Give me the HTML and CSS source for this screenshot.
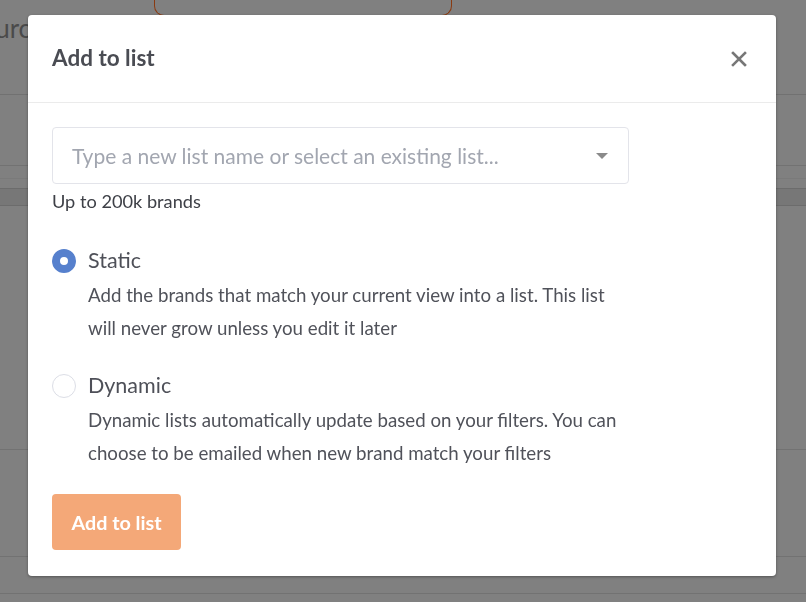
FILE: index.html
```html
<!DOCTYPE html>
<html lang="en">
<head>
    <meta charset="UTF-8">
    <meta name="viewport" content="width=device-width, initial-scale=1.0">
    <title>Add to list</title>
    <link rel="stylesheet" href="styles.css">
</head>
<body>
    <div class="page">
        <div class="page-top">
            <span class="page-title">Resources</span>
            <div class="page-tab"></div>
        </div>
        <div class="page-row row-a"></div>
        <div class="page-row row-b"></div>
        <div class="page-row row-c"></div>
        <div class="page-row row-d"></div>
        <div class="page-row row-e"></div>
        <div class="page-row row-f"></div>
        <div class="page-row row-g"></div>
    </div>

    <div class="overlay">
        <div class="modal">
            <div class="modal-header">
                <h2 class="modal-title">Add to list</h2>
                <button class="close" aria-label="Close">
                    <svg width="16" height="16" viewBox="0 0 16 16">
                        <path d="M2 2 L14 14 M14 2 L2 14" stroke="#777" stroke-width="2.6" stroke-linecap="square"/>
                    </svg>
                </button>
            </div>
            <div class="modal-body">
                <div class="select">
                    <input class="select-input" type="text" placeholder="Type a new list name or select an existing list...">
                    <span class="caret"></span>
                </div>
                <div class="hint">Up to 200k brands</div>

                <label class="option">
                    <span class="radio checked"></span>
                    <span class="option-text">
                        <span class="option-label">Static</span>
                        <span class="option-desc">Add the brands that match your current view into a list. This list will never grow unless you edit it later</span>
                    </span>
                </label>

                <label class="option">
                    <span class="radio"></span>
                    <span class="option-text">
                        <span class="option-label">Dynamic</span>
                        <span class="option-desc">Dynamic lists automatically update based on your filters. You can choose to be emailed when new brand match your filters</span>
                    </span>
                </label>

                <button class="submit">Add to list</button>
            </div>
        </div>
    </div>
</body>
</html>
```

FILE: styles.css
```css
* {
    box-sizing: border-box;
    margin: 0;
    padding: 0;
    font-family: Lato, "Liberation Sans", sans-serif;
}

body {
    background-color: #808080;
    height: 100vh;
    overflow: hidden;
}

/* page behind the dimmed overlay */
.page {
    height: 100%;
}

.page-top {
    display: flex;
    height: 95px;
    border-bottom: 1px solid #717171;
}

.page-title {
    margin-left: -60px;
    margin-top: 12px;
    font-size: 26px;
    color: #4a4a4a;
}

.page-tab {
    margin-left: 98px;
    width: 298px;
    height: 16px;
    border: 1px solid #8a3a10;
    border-top: none;
    border-radius: 0 0 10px 10px;
}

.page-row {
    border-bottom: 1px solid #727272;
}

.row-a { height: 71px; }
.row-b { height: 13px; border-bottom-color: #7a7a7a; }
.row-c { height: 10px; border-bottom-color: #6c6c6c; }
.row-d { height: 17px; background-color: #777; border-bottom-color: #6c6c6c; }
.row-e { height: 244px; }
.row-f { height: 107px; }
.row-g { height: 37px; }

.overlay {
    position: fixed;
    top: 0;
    left: 0;
    right: 0;
    bottom: 0;
    padding: 15px 30px 0 28px;
}

.modal {
    width: 748px;
    height: 561px;
    background-color: white;
    border-radius: 4px;
    box-shadow: 0 1px 3px rgba(0, 0, 0, 0.35);
}

.modal-header {
    display: flex;
    justify-content: space-between;
    align-items: center;
    height: 88px;
    padding: 0 29px 0 24px;
    border-bottom: 1px solid #ebebeb;
}

.modal-title {
    font-size: 22.5px;
    font-weight: 700;
    color: #4a4c53;
    margin-top: -2px;
}

.close {
    background: none;
    border: none;
    cursor: pointer;
    display: flex;
    margin-top: 1px;
}

.modal-body {
    padding: 24px 24px 0 24px;
}

.select {
    display: flex;
    align-items: center;
    justify-content: space-between;
    width: 577px;
    height: 57px;
    border: 1px solid #e3e4ea;
    border-radius: 4px;
    padding: 0 20px 0 19px;
}

.select-input {
    border: none;
    outline: none;
    flex: 1;
    font-size: 21px;
    color: #333;
}

.select-input::placeholder {
    color: #a2a6b0;
}

.caret {
    width: 0;
    height: 0;
    border-left: 6px solid transparent;
    border-right: 6px solid transparent;
    border-top: 6px solid #8a8a8a;
}

.hint {
    margin-top: 6px;
    font-size: 18.2px;
    color: #3e4047;
}

.option {
    display: flex;
    gap: 12px;
    margin-top: 30px;
    cursor: pointer;
}

.option + .option {
    margin-top: 22px;
}

.radio {
    flex: none;
    width: 24px;
    height: 24px;
    margin-top: 6.5px;
    border-radius: 50%;
    border: 1px solid #dcdee6;
    background-color: white;
}

.radio.checked {
    border: 8px solid #5680cd;
}

.option-text {
    display: flex;
    flex-direction: column;
}

.option-label {
    font-size: 21.5px;
    line-height: 37px;
    color: #4e5058;
}

.option-desc {
    width: 540px;
    font-size: 18.7px;
    line-height: 33px;
    color: #50525a;
}

.submit {
    margin-top: 24px;
    width: 129px;
    height: 56px;
    border: none;
    border-radius: 4px;
    background-color: #f4a878;
    color: white;
    font-size: 19.8px;
    font-weight: 700;
    cursor: pointer;
}
```
